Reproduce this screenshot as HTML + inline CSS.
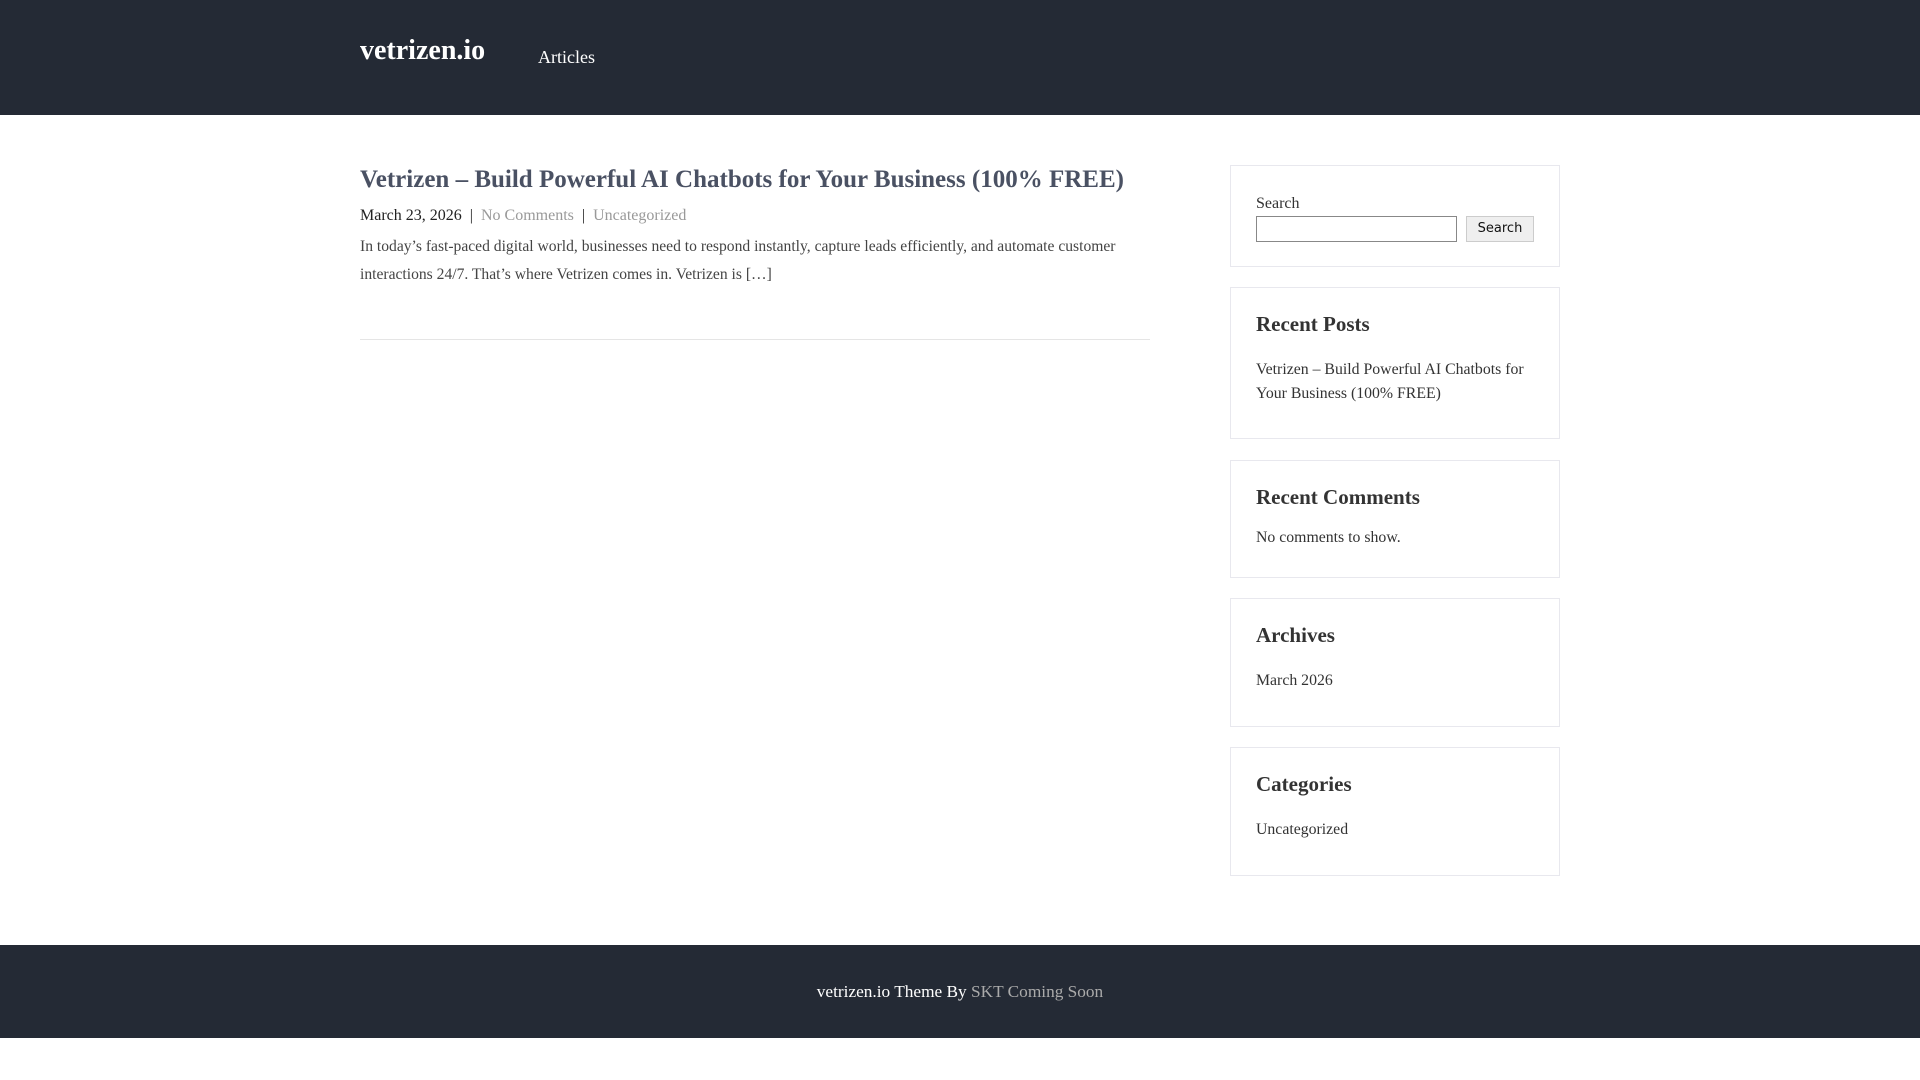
<!DOCTYPE html>
<html><head><meta charset="utf-8"><style>
*{margin:0;padding:0;box-sizing:border-box}
body{width:1920px;height:1080px;background:#fff;font-family:"Liberation Serif",serif;color:#333;position:relative;overflow:hidden}
.hdr{position:absolute;left:0;top:0;width:1920px;height:115px;background:#242a35}
.logo{position:absolute;left:360px;top:33px;font-size:28px;font-weight:bold;color:#fff;line-height:36px}
.nav{position:absolute;left:538px;top:45px;font-size:18px;color:#fff;line-height:24px}
.title{position:absolute;left:360px;top:163px;font-size:25px;font-weight:bold;color:#4a5163;line-height:34px;white-space:nowrap}
.meta{position:absolute;left:360px;top:205px;font-size:16px;line-height:22px;color:#222;white-space:nowrap}
.meta span.g{color:#999}
.exc{position:absolute;left:360px;top:233px;width:790px;font-size:15.6px;line-height:28px;color:#444}
.hr{position:absolute;left:360px;top:339px;width:790px;height:1px;background:#e5e5e5}
.box{position:absolute;left:1230px;width:330px;border:1px solid #e8e8ee;padding:0 25px}
.box h3{font-size:21px;font-weight:bold;color:#333;line-height:26px}
.box p{font-size:15.8px;line-height:24px;color:#333}
.ft{position:absolute;left:0;top:945px;width:1920px;height:93px;background:#242a35;color:#fff;font-size:17.3px;text-align:center;line-height:93px}
.ft span{color:#aaa}
</style></head><body>
<div class="hdr"><div class="logo">vetrizen.io</div><div class="nav">Articles</div></div>
<div class="title">Vetrizen – Build Powerful AI Chatbots for Your Business (100% FREE)</div>
<div class="meta">March 23, 2026 &nbsp;| &nbsp;<span class="g">No Comments</span> &nbsp;| &nbsp;<span class="g">Uncategorized</span></div>
<div class="exc">In today’s fast-paced digital world, businesses need to respond instantly, capture leads efficiently, and automate customer interactions 24/7. That’s where Vetrizen comes in. Vetrizen is […]</div>
<div class="hr"></div>
<div class="box" style="top:165px;height:102px">
<div style="position:absolute;left:25px;top:28px;font-size:16px;line-height:20px">Search</div>
<div style="position:absolute;left:25px;top:50px;width:201px;height:26px;border:1px solid #888"></div>
<div style="position:absolute;left:235px;top:50px;width:68px;height:26px;border:1px solid #ccc;background:#efefef;font-family:'DejaVu Sans','Liberation Sans',sans-serif;font-size:13px;line-height:24px;text-align:center;color:#111">Search</div>
</div>
<div class="box" style="top:287px;height:152px;padding-top:23px"><h3>Recent Posts</h3><p style="margin-top:21px">Vetrizen – Build Powerful AI Chatbots for Your Business (100% FREE)</p></div>
<div class="box" style="top:460px;height:118px;padding-top:23px"><h3>Recent Comments</h3><p style="margin-top:16px">No comments to show.</p></div>
<div class="box" style="top:598px;height:129px;padding-top:23px"><h3>Archives</h3><p style="margin-top:21px">March 2026</p></div>
<div class="box" style="top:747px;height:129px;padding-top:23px"><h3>Categories</h3><p style="margin-top:21px">Uncategorized</p></div>
<div class="ft">vetrizen.io Theme By <span>SKT Coming Soon</span></div>
</body></html>
